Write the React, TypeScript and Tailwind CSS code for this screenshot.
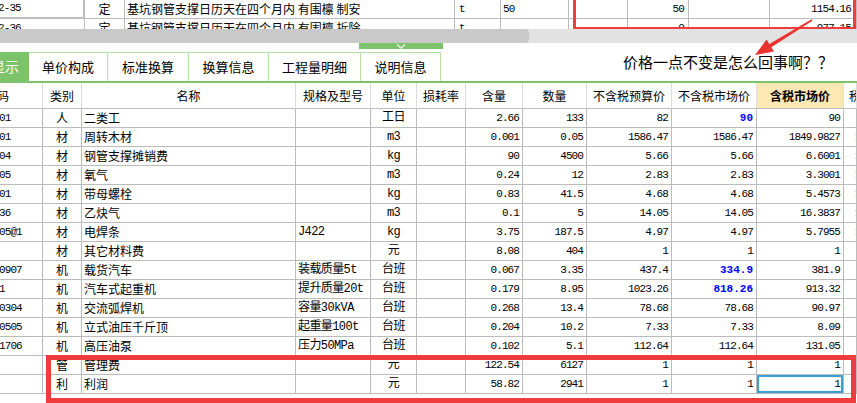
import React from 'react';

type Row = {
  code: string;
  type: string;
  name: string;
  spec?: string;
  unit: string;
  qty: string;
  amount: string;
  budget: string;
  market: string;
  marketBlue?: boolean;
  taxed: string;
  rate?: string;
  selected?: boolean;
};

const rows: Row[] = [
  { code: '01', type: '人', name: '二类工', unit: '工日', qty: '2.66', amount: '133', budget: '82', market: '90', marketBlue: true, taxed: '90' },
  { code: '01', type: '材', name: '周转木材', unit: 'm3', qty: '0.001', amount: '0.05', budget: '1586.47', market: '1586.47', taxed: '1849.9827', rate: '17' },
  { code: '04', type: '材', name: '钢管支撑摊销费', unit: 'kg', qty: '90', amount: '4500', budget: '5.66', market: '5.66', taxed: '6.6001', rate: '17' },
  { code: '05', type: '材', name: '氧气', unit: 'm3', qty: '0.24', amount: '12', budget: '2.83', market: '2.83', taxed: '3.3001', rate: '17' },
  { code: '01', type: '材', name: '带母螺栓', unit: 'kg', qty: '0.83', amount: '41.5', budget: '4.68', market: '4.68', taxed: '5.4573', rate: '17' },
  { code: '36', type: '材', name: '乙炔气', unit: 'm3', qty: '0.1', amount: '5', budget: '14.05', market: '14.05', taxed: '16.3837', rate: '17' },
  { code: '05@1', type: '材', name: '电焊条', spec: 'J422', unit: 'kg', qty: '3.75', amount: '187.5', budget: '4.97', market: '4.97', taxed: '5.7955', rate: '17' },
  { code: '', type: '材', name: '其它材料费', unit: '元', qty: '8.08', amount: '404', budget: '1', market: '1', taxed: '1' },
  { code: '0907', type: '机', name: '载货汽车', spec: '装载质量5t', unit: '台班', qty: '0.067', amount: '3.35', budget: '437.4', market: '334.9', marketBlue: true, taxed: '381.9' },
  { code: '1', type: '机', name: '汽车式起重机', spec: '提升质量20t', unit: '台班', qty: '0.179', amount: '8.95', budget: '1023.26', market: '818.26', marketBlue: true, taxed: '913.32' },
  { code: '0304', type: '机', name: '交流弧焊机', spec: '容量30kVA', unit: '台班', qty: '0.268', amount: '13.4', budget: '78.68', market: '78.68', taxed: '90.97' },
  { code: '0505', type: '机', name: '立式油压千斤顶', spec: '起重量100t', unit: '台班', qty: '0.204', amount: '10.2', budget: '7.33', market: '7.33', taxed: '8.09' },
  { code: '1706', type: '机', name: '高压油泵', spec: '压力50MPa', unit: '台班', qty: '0.102', amount: '5.1', budget: '112.64', market: '112.64', taxed: '131.05' },
  { code: '', type: '管', name: '管理费', unit: '元', qty: '122.54', amount: '6127', budget: '1', market: '1', taxed: '1' },
  { code: '', type: '利', name: '利润', unit: '元', qty: '58.82', amount: '2941', budget: '1', market: '1', taxed: '1', selected: true },
];

const cjk = "font-['Noto_Sans_CJK_SC',sans-serif] text-[12px]";
const mono = "font-['Liberation_Mono','Noto_Sans_CJK_SC',monospace] text-[11px] tracking-[-0.9px]";
const mixed = "font-['Liberation_Mono','Noto_Sans_CJK_SC',monospace] text-[12px] tracking-[-0.6px]";
const cols = 'grid grid-cols-[43px_39px_214px_75px_46px_49px_57px_64px_85px_85px_87px_1fr]';
const cell = 'flex items-center overflow-hidden whitespace-nowrap border-r border-b border-[#bcbcbc] h-[19px]';
const num = `${cell} ${mono} justify-end pr-[3px]`;

function TopRows() {
  const topCols = 'grid grid-cols-[85px_40px_330px_46px_68px_59px_61px_81px_1fr]';
  const c = 'flex items-center overflow-hidden whitespace-nowrap border-r border-b border-[#bcbcbc] h-[19px]';
  return (
    <div className="relative h-[29px] overflow-hidden">
      {[
        ['2-35', '基坑钢管支撑日历天在四个月内 有围檩 制安', '50', '50', '1154.16'],
        ['2-36', '基坑钢管支撑日历天在四个月内 有围檩 拆除', '', '0', '977.15'],
      ].map((r, i) => (
        <div key={i} className={topCols}>
          <div className={`${c} ${mono} ${i === 0 ? 'border-r-2 border-b-2 border-[#707070]' : ''}`}>
            <span className="-ml-[2px]">{r[0]}</span>
          </div>
          <div className={`${c} ${cjk} justify-center`}>定</div>
          <div className={`${c} ${cjk} pl-[2px]`}>{r[1]}</div>
          <div className={`${c} ${mono} pl-[4px]`}>t</div>
          <div className={`${c} ${mono} pl-[2px]`}>{r[2]}</div>
          <div className={c}></div>
          <div className={`${c} ${mono} justify-end pr-[4px]`}>{r[3]}</div>
          <div className={c}></div>
          <div className={`${c} ${mono} justify-end pr-[5px]`}>{r[4]}</div>
        </div>
      ))}
      <div className="absolute left-[573px] top-[-4px] w-[283px] h-[34px] border-[3px] border-[#f03c3c]"></div>
    </div>
  );
}

export default function App() {
  const tabs = [
    { label: '单价构成', w: 'w-[79px]' },
    { label: '标准换算', w: 'w-[81px]' },
    { label: '换算信息', w: 'w-[80px]' },
    { label: '工程量明细', w: 'w-[92px]' },
    { label: '说明信息', w: 'w-[80px]' },
  ];

  return (
    <div className="relative w-[857px] h-[403px] overflow-hidden bg-white text-black">
      <TopRows />

      {/* scrollbar */}
      <div className="flex h-[14px] bg-[#e2e2e2]">
        <div className="w-[529px] bg-[#c9c9c9] rounded-r-[4px]"></div>
      </div>

      {/* drag handle */}
      <div className="h-[6px]">
        <div className="ml-[359px] w-[84px] h-full bg-[#7dc36b] flex justify-center items-center">
          <svg width="10" height="5" viewBox="0 0 10 5">
            <polyline points="1,0.5 5,4 9,0.5" fill="none" stroke="#e8f5e2" strokeWidth="1.4" />
          </svg>
        </div>
      </div>

      {/* tabs */}
      <div className="flex h-[34px] border-b-2 border-[#7dc36b]">
        <div className="flex pt-[3px]">
          <div className={`w-[29px] bg-[#7dc36b] text-white flex items-center overflow-hidden ${cjk}`}>
            <span className="-ml-[9px] whitespace-nowrap text-[14px]">显示</span>
          </div>
          {tabs.map((t) => (
            <div
              key={t.label}
              className={`${t.w} border-t border-r border-[#b5e2a3] flex items-center justify-center ${cjk} text-[13px]`}
            >
              {t.label}
            </div>
          ))}
        </div>
        <div className="flex-1 flex justify-end items-start pt-[4px] pr-[24px]">
          <span className="font-['Noto_Sans_CJK_SC',sans-serif] text-[15px] leading-[18px]">价格一点不变是怎么回事啊？？</span>
        </div>
      </div>

      {/* main grid */}
      <div className={`${cols} h-[26px]`}>
        {['码', '类别', '名称', '规格及型号', '单位', '损耗率', '含量', '数量', '不含税预算价', '不含税市场价', '含税市场价', '税率'].map((h, i) => (
          <div
            key={h}
            className={`flex items-center overflow-hidden whitespace-nowrap border-r border-r-[#dcdcdc] border-b border-b-[#bcbcbc] ${cjk} ${
              i === 0 ? 'justify-start' : i === 11 ? 'justify-start pl-[5px]' : 'justify-center'
            } ${i === 10 ? 'bg-[#fce8b2] font-bold' : ''}`}
          >
            <span className={i === 0 ? '-ml-[3px]' : ''}>{h}</span>
          </div>
        ))}
      </div>

      {rows.map((r, i) => (
        <div key={i} className={cols}>
          <div className={`${cell} ${mono}`}>
            <span className="-ml-[1px]">{r.code}</span>
          </div>
          <div className={`${cell} ${cjk} justify-center`}>{r.type}</div>
          <div className={`${cell} ${cjk} pl-[2px]`}>{r.name}</div>
          <div className={`${cell} ${mixed} pl-[2px]`}>{r.spec}</div>
          <div className={`${cell} ${mixed} justify-center`}>{r.unit}</div>
          <div className={cell}></div>
          <div className={num}>{r.qty}</div>
          <div className={num}>{r.amount}</div>
          <div className={num}>{r.budget}</div>
          <div className={`${num} ${r.marketBlue ? 'text-[#0000ff] font-bold tracking-[0px]' : ''}`}>{r.market}</div>
          <div className={`${num} ${r.selected ? 'shadow-[inset_0_0_0_2px_#3aa0d2]' : ''}`}>{r.taxed}</div>
          <div className={`${cell} ${mono} pl-[11px]`}>{r.rate}</div>
        </div>
      ))}

      {/* annotation box at bottom */}
      <div className="absolute left-[46px] top-[355px] w-[810px] h-[48px] border-[5px] border-[#f03c3c] pointer-events-none"></div>

      {/* arrow */}
      <svg className="absolute left-0 top-0 pointer-events-none" width="857" height="100" viewBox="0 0 857 100">
        <polygon
          points="755,55 774,51.6 771.3,47.3 812.4,20.7 811.6,19.3 769.3,43.9 766.6,39.6"
          fill="#ea3330"
        />
      </svg>
    </div>
  );
}
